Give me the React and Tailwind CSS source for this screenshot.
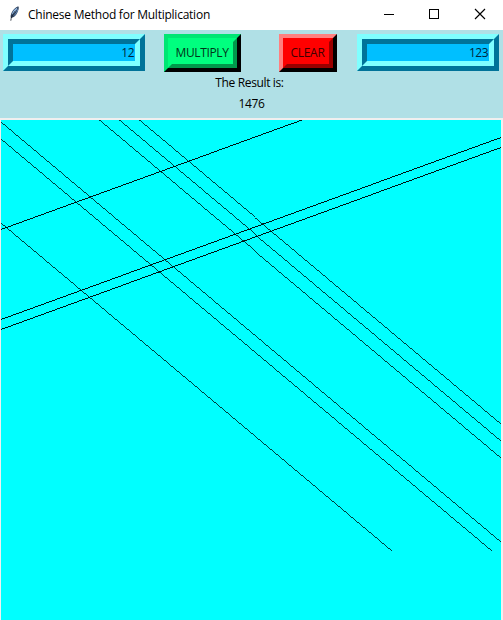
const LINES = [
  [97.5, 0, 500, 338],
  [117.5, 0, 500, 321],
  [137.5, 0, 500, 304],
  [0, 2, 500, 422],
  [0, 19, 491, 431],
  [0, 103, 391, 431],
  [0, 109.5, 301, 0],
  [0, 199.5, 500, 17.5],
  [0, 209.5, 500, 27.5],
];

function Feather() {
  return (
    <svg className="h-4 w-4 shrink-0" viewBox="0 0 16 16" fill="none">
      <path d="M3.6 11.5C3.3 8.500 5 4.500 8 2.200C9.500 1 11.300.3 11.600.7C12.100 1.500 11.500 4.500 10.200 7C9 9.500 7 11.500 4.300 12Z" fill="#2d405c" />
      <path d="M4.800 9C5.300 5.500 7.500 2.700 10.500 1.500C9.500 4.500 7.500 7 4.800 9Z" fill="#9cc2ee" />
      <path d="M7 9.600C9 7.800 10.400 5.500 10.900 3.200" stroke="#6b8fbd" />
      <path d="M3.800 14.700C4 11.500 5.500 8.500 8.400 4.700" stroke="#17202b" strokeWidth=".8" />
    </svg>
  );
}

function Entry({ value }) {
  return (
    <div className="h-[37px] w-[142px] border-[5px] border-t-[#80ffff] border-r-[#007399] border-b-[#007399] border-l-[#80ffff]">
      <div className="h-[27px] border-[5px] border-t-[#007399] border-r-[#80ffff] border-b-[#80ffff] border-l-[#007399] bg-[#00bfff] pr-px text-right leading-[18px] tracking-[-0.5px] text-[#00263b]">
        {value}
      </div>
    </div>
  );
}

export default function App() {
  return (
    <div className="flex h-[620px] w-[503px] flex-col overflow-hidden bg-[#f0f0f0] font-['Open_Sans','Noto_Sans',sans-serif] text-[12px] text-black">
      <header className="flex h-[30px] shrink-0 items-center bg-white pl-[7px]">
        <div className="pb-[2px]"><Feather /></div>
        <h1 className="ml-[5px] grow whitespace-nowrap tracking-[-0.24px]">Chinese Method for Multiplication</h1>
        <svg className="h-[30px] w-[120px] shrink-0" viewBox="-5 0 120 30" fill="none" stroke="#000" shapeRendering="crispEdges">
          <path d="M-4 14.500H6M41.500 9.500H50.500V18.500H41.500Z" />
          <path d="M87 9L97 19M97 9L87 19" strokeWidth="1.15" shapeRendering="auto" />
        </svg>
      </header>
      <section className="h-[88px] shrink-0 bg-[#b0e0e6] pt-1">
        <div className="flex pl-[3px]">
          <Entry value="12" />
          <button className="ml-[19px] h-[38px] w-[77px] border-4 border-t-[#00e673] border-r-black border-b-black border-l-[#00e673]">
            <span className="block h-[30px] border-4 border-t-[#00ff7f] border-r-[#00994c] border-b-[#00994c] border-l-[#00ff7f] bg-[#00ff7f] pr-px leading-[22px] tracking-[-0.36px] text-[#003319]">MULTIPLY</span>
          </button>
          <button className="ml-[38px] h-[38px] w-[58px] border-4 border-t-[#ff8080] border-r-black border-b-black border-l-[#ff8080]">
            <span className="block h-[30px] border-4 border-t-[#ff0000] border-r-[#990000] border-b-[#990000] border-l-[#ff0000] bg-[#ff0000] pr-px leading-[22px] tracking-[-0.3px] text-[#400000]">CLEAR</span>
          </button>
          <div className="ml-5"><Entry value="123" /></div>
        </div>
        <div className="text-center leading-[21px] tracking-[-0.3px]">
          <p className="mr-[4px] tracking-[-0.36px]">The Result is:</p>
          <p>1476</p>
        </div>
      </section>
      <main className="mt-0.5 ml-px h-[500px] w-[500px] bg-[#00ffff]">
        <svg className="block h-[500px] w-[500px]" viewBox="0 0 500 500" stroke="#000" shapeRendering="crispEdges">
          {LINES.map(([x1, y1, x2, y2], i) => (
            <line key={i} x1={x1} y1={y1} x2={x2} y2={y2} strokeWidth={y2 > y1 ? 0.766 : 0.94} />
          ))}
        </svg>
      </main>
    </div>
  );
}
